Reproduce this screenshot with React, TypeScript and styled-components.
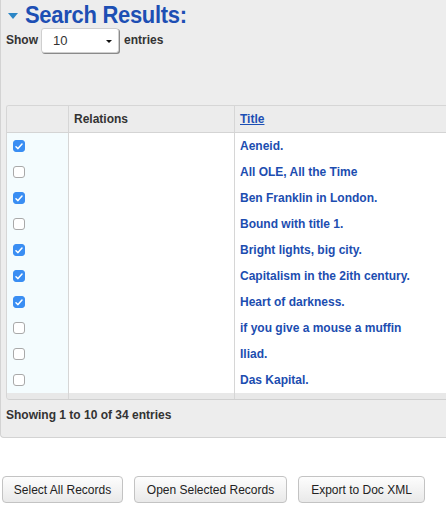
import React from "react";
import styled, { createGlobalStyle } from "styled-components";

const Global = createGlobalStyle`
  html, body { margin: 0; padding: 0; background: #fff; }
  body { font-family: "Liberation Sans", Arial, sans-serif; overflow: hidden; }
`;

const Page = styled.div`
  width: 446px;
  height: 507px;
  overflow: hidden;
`;

const Panel = styled.div`
  background: #ededed;
  border-left: 1px solid #d3d3d3;
  border-bottom: 1px solid #d3d3d3;
  border-bottom-left-radius: 4px;
  padding: 0 0 15px 5px;
  height: 438px;
  box-sizing: border-box;
`;

const TitleRow = styled.div`
  display: flex;
  align-items: center;
  height: 28px;
  gap: 7px;
  padding-left: 2px;
  padding-top: 2px;
  box-sizing: border-box;
`;

const Triangle = styled.span`
  width: 0;
  height: 0;
  border-left: 5px solid transparent;
  border-right: 5px solid transparent;
  border-top: 6px solid #2b86c6;
  margin-top: 1px;
`;

const Title = styled.h2`
  margin: 0;
  font-family: "Liberation Sans", Arial, sans-serif;
  font-weight: 700;
  font-size: 22px;
  letter-spacing: -0.3px;
  color: #1d4fb4;
  line-height: 26px;
  transform: scaleY(1.1);
`;

const ShowRow = styled.div`
  display: flex;
  align-items: center;
  height: 26px;
  margin-top: -1px;
  gap: 4px;
  font-size: 12px;
  font-weight: 700;
  color: #333;
`;

const Select = styled.div`
  position: relative;
  width: 78px;
  height: 25px;
  box-sizing: border-box;
  background: #fff;
  border: 1px solid #cfcfcf;
  border-radius: 3px;
  box-shadow: 1px 1px 0 #8a8a8a;
  display: flex;
  align-items: center;
  padding-left: 11px;
  font-weight: 400;
  font-size: 13px;
  color: #333;
  margin-left: -1px;
  margin-right: 1px;
`;

const Caret = styled.span`
  position: absolute;
  right: 6px;
  top: 11px;
  border-left: 3px solid transparent;
  border-right: 3px solid transparent;
  border-top: 3px solid #111;
`;

const Table = styled.div`
  margin-top: 52px;
  border-top: 1px solid #d6d6d6;
  border-left: 1px solid #d6d6d6;
  border-bottom: 1px solid #d0d0d0;
  border-top-left-radius: 3px;
  border-bottom-left-radius: 4px;
  overflow: hidden;
`;

const Row = styled.div<{ $head?: boolean; $band?: boolean }>`
  display: grid;
  grid-template-columns: 62px 166px 1fr;
  height: ${(p) => (p.$band ? "6px" : "26px")};
  background: ${(p) => (p.$head ? "#ececec" : p.$band ? "#e8e8e8" : "#fff")};
  border-bottom: ${(p) => (p.$head ? "1px solid #d4d4d4" : "none")};
`;

const Cell = styled.div<{ $check?: boolean; $band?: boolean; $last?: boolean }>`
  display: flex;
  align-items: center;
  padding-left: ${(p) => (p.$check ? "6px" : "5px")};
  border-right: ${(p) => (p.$last ? "none" : "1px solid #d6d6d6")};
  background: ${(p) => (p.$check && !p.$band ? "#f4fcfe" : "transparent")};
  font-size: 12px;
  font-weight: 700;
  color: #333;
  white-space: nowrap;
`;

const HeadLink = styled.span`
  color: #1d4fb4;
  text-decoration: underline;
`;

const TitleLink = styled.span`
  color: #1c4db0;
`;

const Box = styled.span<{ $on?: boolean }>`
  width: 12px;
  height: 12px;
  box-sizing: border-box;
  border-radius: 3px;
  background: ${(p) => (p.$on ? "#3a8ef3" : "#fff")};
  border: 1px solid ${(p) => (p.$on ? "#3a8ef3" : "#a9a9a9")};
  display: flex;
  align-items: center;
  justify-content: center;
`;

const Footer = styled.div`
  margin-top: 8px;
  font-size: 12px;
  font-weight: 700;
  color: #333;
  line-height: 14px;
`;

const Buttons = styled.div`
  display: flex;
  gap: 11px;
  padding-left: 2px;
  margin-top: 38px;
`;

const Button = styled.button<{ $w: number }>`
  width: ${(p) => p.$w}px;
  height: 27px;
  box-sizing: border-box;
  border: 1px solid #c3c3c3;
  border-radius: 4px;
  background: linear-gradient(#fdfdfd, #e9e9e9);
  font-family: "Liberation Sans", Arial, sans-serif;
  font-size: 12px;
  color: #222;
  padding: 0;
`;

const rows: [boolean, string][] = [
  [true, "Aeneid."],
  [false, "All OLE, All the Time"],
  [true, "Ben Franklin in London."],
  [false, "Bound with title 1."],
  [true, "Bright lights, big city."],
  [true, "Capitalism in the 2ith century."],
  [true, "Heart of darkness."],
  [false, "if you give a mouse a muffin"],
  [false, "Iliad."],
  [false, "Das Kapital."],
];

const Check = () => (
  <svg width="8" height="7" viewBox="0 0 8 7">
    <path d="M1 3.8 L3 5.6 L7 1" fill="none" stroke="#fff" strokeWidth="1.5" strokeLinecap="round" strokeLinejoin="round" />
  </svg>
);

export default function App() {
  return (
    <Page>
      <Global />
      <Panel>
        <TitleRow>
          <Triangle />
          <Title>Search Results:</Title>
        </TitleRow>
        <ShowRow>
          <span>Show</span>
          <Select>
            10
            <Caret />
          </Select>
          <span>entries</span>
        </ShowRow>
        <Table>
          <Row $head>
            <Cell />
            <Cell>Relations</Cell>
            <Cell $last>
              <HeadLink>Title</HeadLink>
            </Cell>
          </Row>
          {rows.map(([on, t]) => (
            <Row key={t}>
              <Cell $check>
                <Box $on={on}>{on && <Check />}</Box>
              </Cell>
              <Cell />
              <Cell $last>
                <TitleLink>{t}</TitleLink>
              </Cell>
            </Row>
          ))}
          <Row $band>
            <Cell $check $band />
            <Cell $band />
            <Cell $band $last />
          </Row>
        </Table>
        <Footer>Showing 1 to 10 of 34 entries</Footer>
      </Panel>
      <Buttons>
        <Button $w={121}>Select All Records</Button>
        <Button $w={153}>Open Selected Records</Button>
        <Button $w={127}>Export to Doc XML</Button>
      </Buttons>
    </Page>
  );
}
